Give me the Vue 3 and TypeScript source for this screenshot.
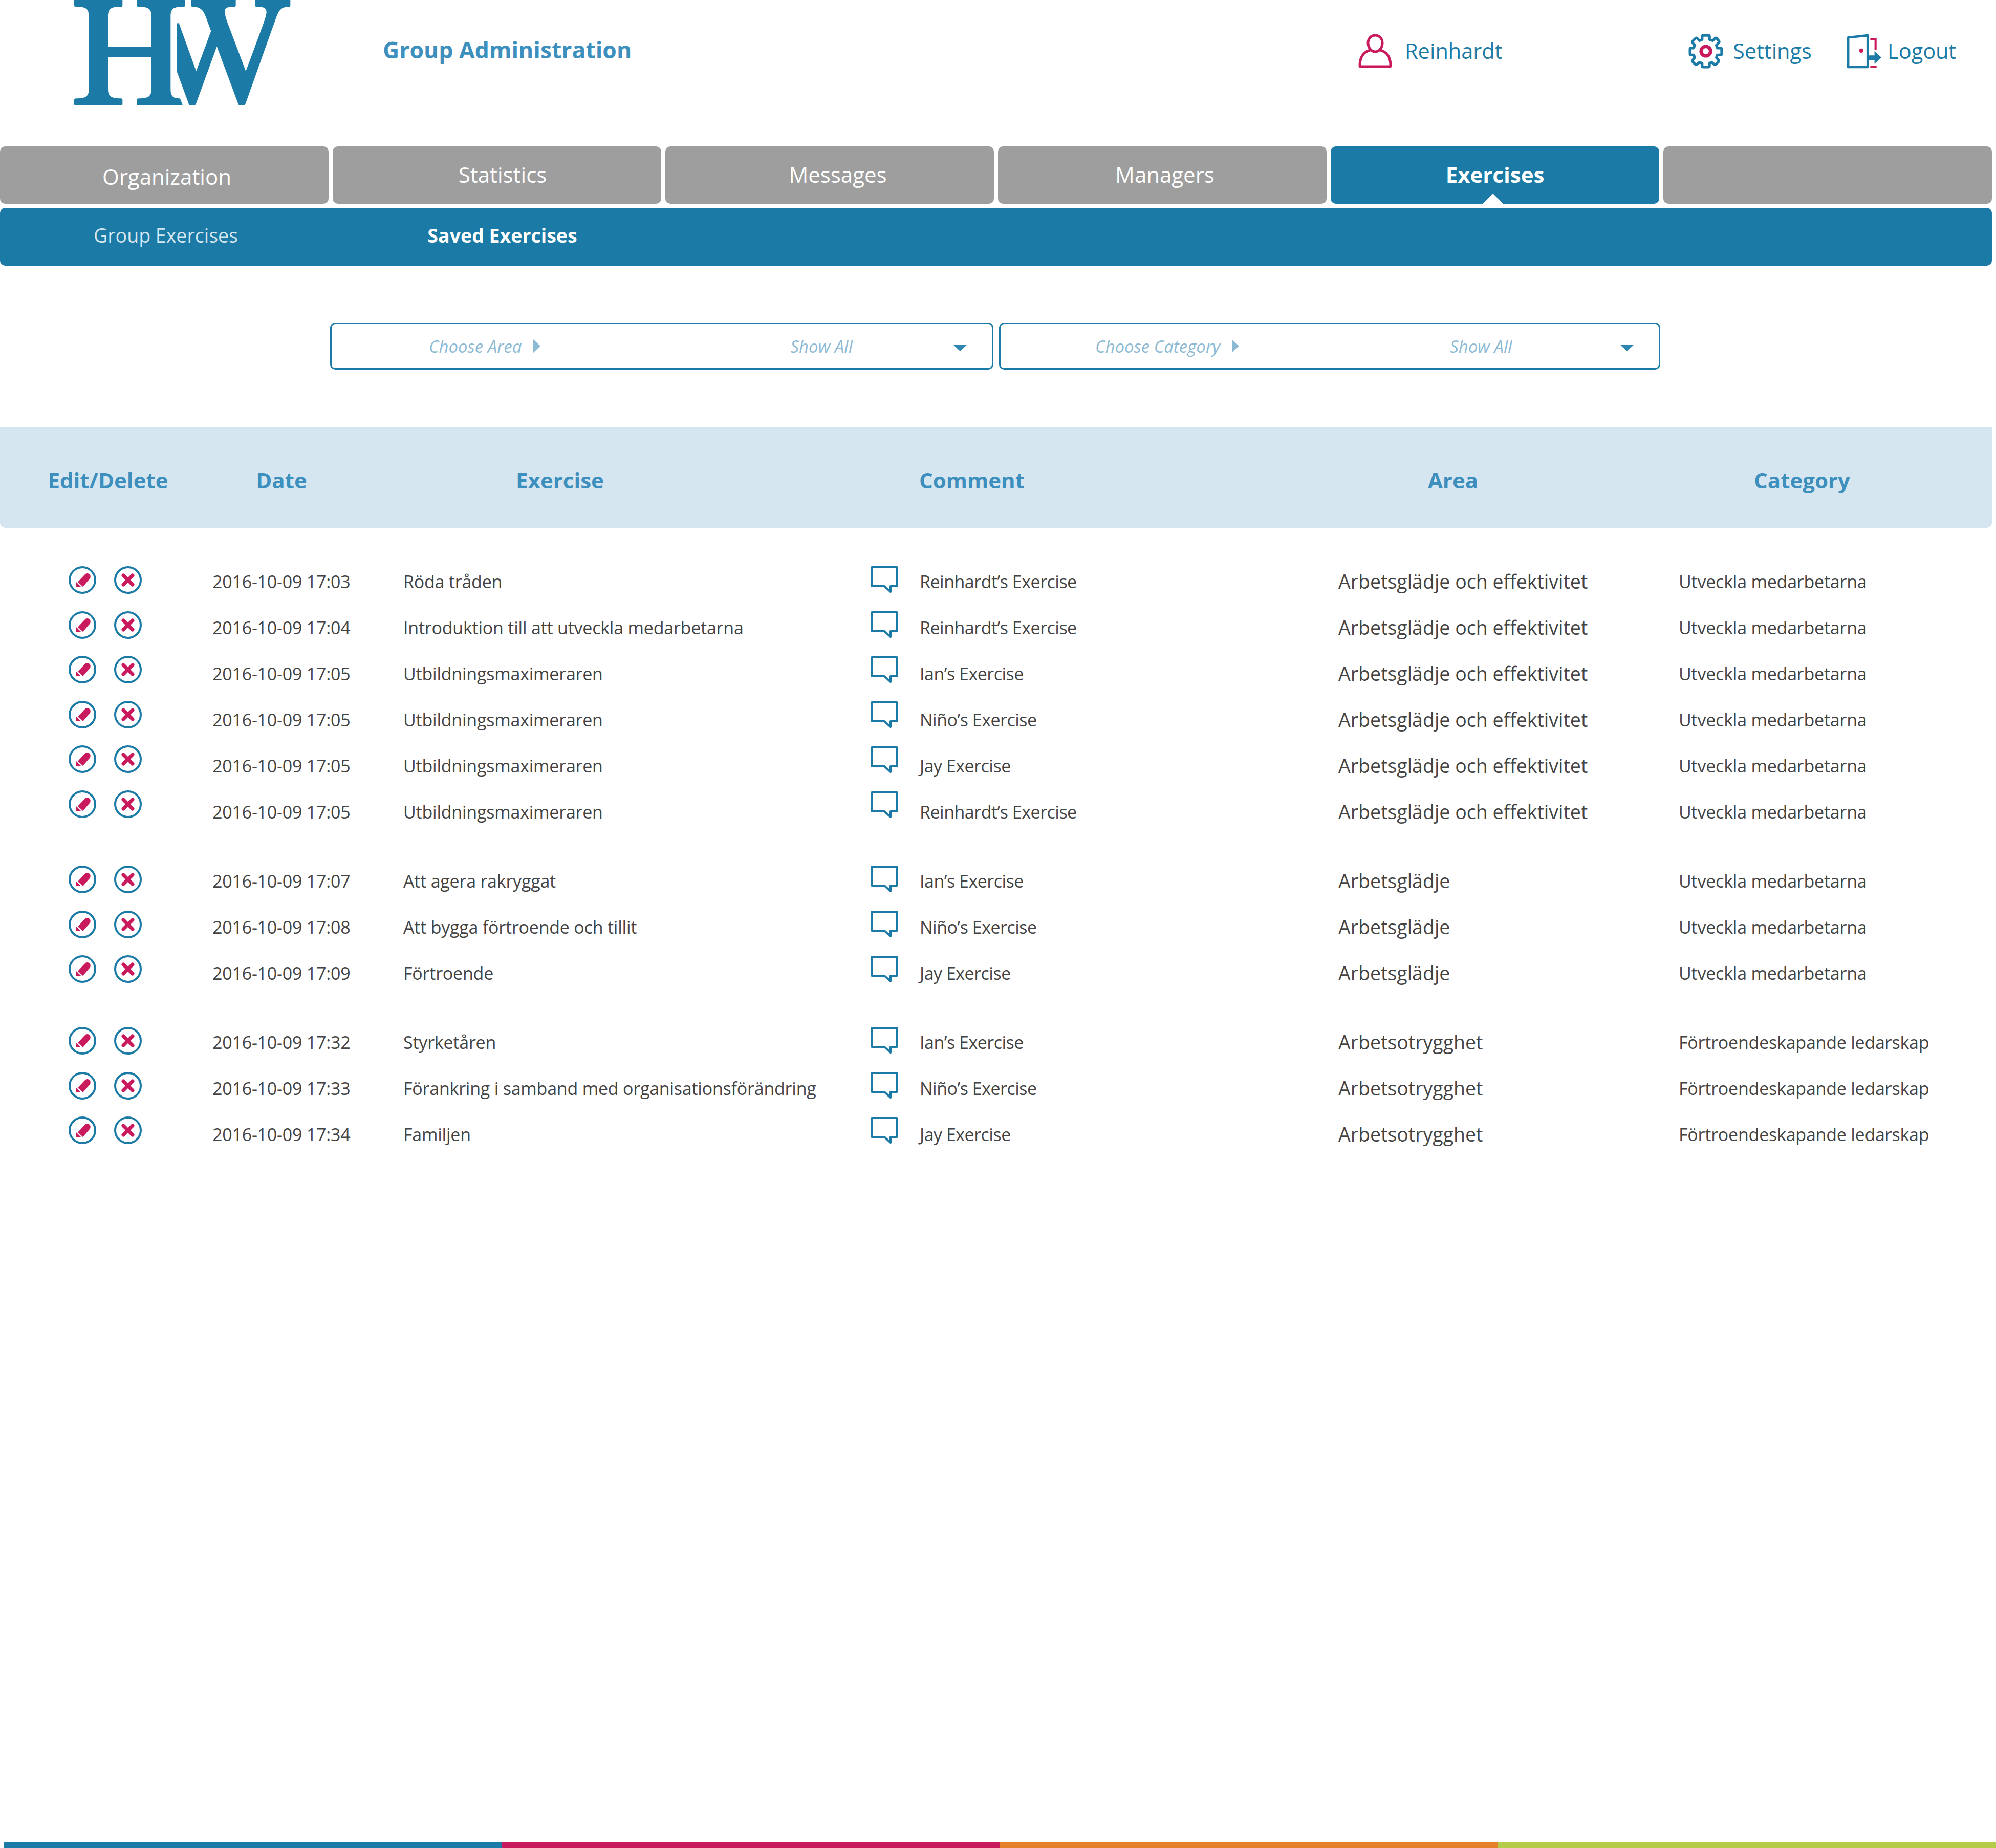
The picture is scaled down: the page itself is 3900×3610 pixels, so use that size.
<template>
  <div class="page">
    <header class="topbar">
      <svg class="logo" viewBox="0 0 1560 690" aria-label="HW">
        <path d="M135 0H418V30Q418 40 408 40C350 40 333 50 333 100V275H588V100C588 50 570 40 512 40Q502 40 502 30V0H785V30Q785 40 775 40C715 40 700 50 700 100V520C700 565 715 577 755 577L770 612Q770 618 762 618H510Q502 618 502 610V587Q502 577 512 577C570 577 588 565 588 520V333H333V520C333 565 350 577 410 577Q418 577 418 587V610Q418 618 410 618H143Q135 618 135 610V587Q135 577 145 577C205 577 221 565 221 520V100C221 50 205 40 145 40Q135 40 135 30Z" />
        <path d="M820 0H1082V30Q1082 40 1072 40C1030 40 1018 45 1018 70C1018 90 1030 125 1040 150L1141 417L1240 150C1250 120 1262 90 1262 70C1262 45 1240 40 1205 40Q1195 40 1195 30V0H1402V30Q1402 40 1392 40C1350 40 1335 60 1320 100L1140 605Q1135 618 1125 618H1108Q1098 618 1095 605L971 272L850 605Q845 618 835 618H818Q808 618 805 605L737 420V145Q737 135 743 135Q749 135 752 145L850 417L937 182L905 95C890 55 870 40 830 40Q820 40 820 30Z" />
      </svg>
      <h1 class="title">Group Administration</h1>
      <a class="toplink user">
        <svg class="ic-user" viewBox="0 0 68 68" fill="none" stroke="#c91a5e" stroke-width="5">
          <path d="M34 35C26 35 20 27 20 18C20 9 26 3 34 3C42 3 48 9 48 18C48 27 42 35 34 35Z" />
          <path d="M24 32C12 35 4 45 4 62Q4 64 6 64H62Q64 64 64 62C64 45 56 35 44 32" />
        </svg>
        <span>Reinhardt</span>
      </a>
      <a class="toplink settings">
        <svg class="ic-gear" viewBox="0 0 66 66" fill="none">
          <path stroke="#1b7ba6" stroke-width="5" stroke-linejoin="round" d="M26 5Q26 3 28 3H38Q40 3 40 5V11L46 13L50 9Q52 7 54 9L58 14Q59 16 57 17L53 22L55 27H61Q63 27 63 29V38Q63 40 61 40H55L53 45L57 50Q58 52 57 53L52 58Q50 59 49 58L44 54L40 56V61Q40 63 38 63H28Q26 63 26 61V56L21 54L16 58Q15 59 13 58L8 53Q7 52 8 50L12 45L10 40H5Q3 40 3 38V29Q3 27 5 27H10L12 22L8 17Q7 15 8 14L13 9Q15 7 17 9L21 13L26 11Z" />
          <circle cx="33" cy="33" r="9" stroke="#c91a5e" stroke-width="6.5" />
        </svg>
        <span>Settings</span>
      </a>
      <a class="toplink logout">
        <svg class="ic-door" viewBox="0 0 66 66">
          <path fill="none" stroke="#1b7ba6" stroke-width="4.5" stroke-linejoin="round" d="M3 7L40 3V63H3Z" />
          <circle cx="28" cy="32" r="4" fill="#c91a5e" />
          <path fill="none" stroke="#c91a5e" stroke-width="4" d="M45 10H55V30M45 63H55V61" />
          <path fill="#1b7ba6" d="M41 41H53V33L66 45L53 57V50H41Z" />
        </svg>
        <span>Logout</span>
      </a>
    </header>

    <nav class="tabs">
      <div
        v-for="tab in tabs"
        :key="tab.label + tab.shift"
        class="tab"
        :class="{ active: tab.active, low: tab.low }"
        :style="{ paddingLeft: tab.shift + 'px' }"
      >
        {{ tab.label }}
      </div>
    </nav>

    <div class="subbar">
      <span class="sub">Group Exercises</span>
      <span class="sub current">Saved Exercises</span>
    </div>

    <div class="filters">
      <div class="select">
        <span class="sel-label first">Choose Area</span>
        <i class="tri-right"></i>
        <span class="sel-value first">Show All</span>
        <i class="tri-down"></i>
      </div>
      <div class="select narrow">
        <span class="sel-label second">Choose Category</span>
        <i class="tri-right"></i>
        <span class="sel-value second">Show All</span>
        <i class="tri-down"></i>
      </div>
    </div>

    <div class="thead">
      <span class="th">Edit/Delete</span>
      <span class="th">Date</span>
      <span class="th">Exercise</span>
      <span class="th">Comment</span>
      <span class="th">Area</span>
      <span class="th">Category</span>
    </div>

    <section v-for="(group, g) in groups" :key="g" class="group">
      <div class="col actions">
        <div v-for="(r, i) in group" :key="i" class="act-row">
          <svg class="round" viewBox="0 0 54 54">
            <circle cx="27" cy="27" r="25" fill="none" stroke="#1b7ba6" stroke-width="4" />
            <path fill="#c91a5e" d="M18 31L31 17Q35 12 40 15Q45 20 41 25L28 40Z" />
            <path fill="#c91a5e" d="M14 30L24 40H14Z" />
          </svg>
          <svg class="round" viewBox="0 0 54 54">
            <circle cx="27" cy="27" r="25" fill="none" stroke="#1b7ba6" stroke-width="4" />
            <path stroke="#c91a5e" stroke-width="7" stroke-linecap="round" d="M18 18L36 36M36 18L18 36" />
          </svg>
        </div>
      </div>
      <div class="col dates">
        <div v-for="(r, i) in group" :key="i" class="cell">{{ r.date }}</div>
      </div>
      <div class="col names">
        <div v-for="(r, i) in group" :key="i" class="cell">{{ r.name }}</div>
      </div>
      <div class="col bubbles">
        <svg v-for="(r, i) in group" :key="i" class="bubble" viewBox="0 0 54 54">
          <path fill="none" stroke="#1b7ba6" stroke-width="4" stroke-linejoin="round" d="M3 2H51Q52 2 52 3V38Q52 39 51 39H39V50L27 39H3Q2 39 2 38V3Q2 2 3 2Z" />
        </svg>
      </div>
      <div class="col comments">
        <div v-for="(r, i) in group" :key="i" class="cell">{{ r.comment }}</div>
      </div>
      <div class="col areas">
        <div v-for="(r, i) in group" :key="i" class="cell">{{ r.area }}</div>
      </div>
      <div class="col cats">
        <div v-for="(r, i) in group" :key="i" class="cell">{{ r.cat }}</div>
      </div>
    </section>

    <div class="spacer"></div>

    <footer class="stripes">
      <i class="s1"></i><i class="s2"></i><i class="s3"></i><i class="s4"></i>
    </footer>
  </div>
</template>

<script setup lang="ts">
interface Row {
  date: string
  name: string
  comment: string
  area: string
  cat: string
}

const tabs = [
  { label: 'Organization', shift: 10, low: true },
  { label: 'Statistics', shift: 22 },
  { label: 'Messages', shift: 32 },
  { label: 'Managers', shift: 10 },
  { label: 'Exercises', shift: 0, active: true },
  { label: '', shift: 1 },
]

const A1 = 'Arbetsglädje och effektivitet'
const A2 = 'Arbetsglädje'
const A3 = 'Arbetsotrygghet'
const C1 = 'Utveckla medarbetarna'
const C2 = 'Förtroendeskapande ledarskap'
const R = 'Reinhardt’s Exercise'
const I = 'Ian’s Exercise'
const N = 'Niño’s Exercise'
const J = 'Jay Exercise'
const U = 'Utbildningsmaximeraren'

const groups: Row[][] = [
  [
    { date: '2016-10-09 17:03', name: 'Röda tråden', comment: R, area: A1, cat: C1 },
    { date: '2016-10-09 17:04', name: 'Introduktion till att utveckla medarbetarna', comment: R, area: A1, cat: C1 },
    { date: '2016-10-09 17:05', name: U, comment: I, area: A1, cat: C1 },
    { date: '2016-10-09 17:05', name: U, comment: N, area: A1, cat: C1 },
    { date: '2016-10-09 17:05', name: U, comment: J, area: A1, cat: C1 },
    { date: '2016-10-09 17:05', name: U, comment: R, area: A1, cat: C1 },
  ],
  [
    { date: '2016-10-09 17:07', name: 'Att agera rakryggat', comment: I, area: A2, cat: C1 },
    { date: '2016-10-09 17:08', name: 'Att bygga förtroende och tillit', comment: N, area: A2, cat: C1 },
    { date: '2016-10-09 17:09', name: 'Förtroende', comment: J, area: A2, cat: C1 },
  ],
  [
    { date: '2016-10-09 17:32', name: 'Styrketåren', comment: I, area: A3, cat: C2 },
    { date: '2016-10-09 17:33', name: 'Förankring i samband med organisationsförändring', comment: N, area: A3, cat: C2 },
    { date: '2016-10-09 17:34', name: 'Familjen', comment: J, area: A3, cat: C2 },
  ],
]
</script>

<style>
html,
body {
  margin: 0;
  background: #fff;
}
</style>

<style scoped>
.page {
  width: 3900px;
  height: 3610px;
  display: flex;
  flex-direction: column;
  font-family: "Open Sans", "Noto Sans", sans-serif;
  color: #444;
  overflow: hidden;
}

.topbar {
  height: 286px;
  display: flex;
  align-items: flex-start;
  flex: none;
}

.logo {
  width: 520px;
  height: 230px;
  margin-left: 100px;
  flex: none;
  fill: #1b7ba6;
}

.title {
  margin: 65px 0 0 128px;
  font-size: 44.5px;
  line-height: 64px;
  font-weight: 700;
  color: #3d8fbd;
  width: 1905px;
  flex: none;
}

.toplink {
  display: flex;
  align-items: center;
  gap: 24px;
  color: #1b7ba6;
  font-size: 41.5px;
  line-height: 66px;
  flex: none;
  margin-top: 66px;
}

.toplink span {
  margin-top: -3px;
}

.user {
  width: 646px;
}

.settings {
  width: 309px;
  gap: 19px;
}

.logout {
  gap: 12px;
}

.ic-user,
.ic-gear,
.ic-door {
  width: 68px;
  height: 68px;
  flex: none;
}

.tabs {
  display: grid;
  grid-template-columns: repeat(6, 642px);
  gap: 8px;
  flex: none;
}

.tab {
  box-sizing: border-box;
  height: 112px;
  background: #9d9e9d;
  border-radius: 10px;
  color: #fff;
  font-size: 42px;
  line-height: 110px;
  text-align: center;
  position: relative;
}

.tab.low {
  line-height: 118px;
}

.tab.active {
  background: #1b7ba6;
  font-weight: 700;
}

.tab.active::after {
  content: "";
  position: absolute;
  left: 297px;
  bottom: 0;
  border-left: 20px solid transparent;
  border-right: 20px solid transparent;
  border-bottom: 20px solid #fff;
}

.subbar {
  width: 3892px;
  height: 113px;
  margin-top: 8px;
  background: #1b7ba6;
  border-radius: 10px;
  display: flex;
  align-items: center;
  flex: none;
  padding-bottom: 6px;
  box-sizing: border-box;
}

.sub {
  font-size: 37.5px;
  color: #d6e6ef;
  width: 648px;
  text-align: center;
  box-sizing: border-box;
}

.sub.current {
  color: #fff;
  font-weight: 700;
  padding-left: 19px;
}

.filters {
  display: flex;
  gap: 11px;
  margin: 111px 0 0 645px;
  flex: none;
}

.select {
  width: 1296px;
  height: 92px;
  box-sizing: border-box;
  border: 3px solid #1b7ba6;
  border-radius: 10px;
  display: flex;
  align-items: center;
  position: relative;
  font-style: italic;
  font-size: 33px;
  color: #8cbad4;
}

.select.narrow {
  width: 1292px;
}

.sel-label.first {
  margin-left: 190px;
}

.sel-label.second {
  margin-left: 185px;
}

.tri-right {
  width: 0;
  height: 0;
  margin-left: 23px;
  border-top: 13px solid transparent;
  border-bottom: 13px solid transparent;
  border-left: 14px solid #8cbad4;
}

.sel-value.first {
  margin-left: 488px;
}

.sel-value.second {
  margin-left: 412px;
}

.tri-down {
  position: absolute;
  right: 48px;
  top: 40px;
  width: 0;
  height: 0;
  border-left: 14px solid transparent;
  border-right: 14px solid transparent;
  border-top: 13px solid #2f86b3;
}

.thead {
  width: 3892px;
  height: 196px;
  margin-top: 113px;
  padding-top: 9px;
  box-sizing: border-box;
  background: #d5e6f1;
  border-radius: 0 0 10px 10px;
  display: grid;
  grid-template-columns: 422px 256px 832px 778px 1102px 262px;
  align-items: center;
  flex: none;
}

.th {
  font-size: 42px;
  font-weight: 700;
  color: #3d8fbd;
  text-align: center;
}

.group {
  display: flex;
  flex: none;
  margin-top: 45px;
}

.thead + .group {
  margin-top: 59px;
}

.col {
  display: flex;
  flex-direction: column;
  flex: none;
}

.cell {
  height: 90px;
  line-height: 92px;
  font-size: 34px;
  letter-spacing: -0.22px;
  white-space: nowrap;
}

.actions {
  width: 415px;
  box-sizing: border-box;
  padding: 16px 0 0 134px;
}

.act-row {
  height: 87.6px;
  display: flex;
  gap: 35px;
}

.act-row:last-child {
  height: 54px;
}

.round {
  width: 54px;
  height: 54px;
  flex: none;
}

.dates {
  width: 373px;
}

.names {
  width: 913px;
}

.bubbles {
  width: 96px;
  box-sizing: border-box;
  padding-top: 16px;
}

.bubble {
  width: 54px;
  height: 54px;
  margin-bottom: 34px;
  flex: none;
}

.bubble:last-child {
  margin-bottom: 0;
}

.comments {
  width: 818px;
}

.comments .cell {
  letter-spacing: -0.5px;
}

.areas {
  width: 665px;
}

.areas .cell {
  font-size: 37.5px;
  letter-spacing: 0;
}

.cats {
  width: 600px;
}

.spacer {
  flex: 1;
}

.stripes {
  height: 12px;
  margin-left: 7px;
  display: flex;
  flex: none;
}

.stripes i {
  flex: 1;
}

.s1 {
  background: #1b7ba6;
}

.s2 {
  background: #c91a5e;
}

.s3 {
  background: #e5812b;
}

.s4 {
  background: #b5cc4a;
}
</style>
